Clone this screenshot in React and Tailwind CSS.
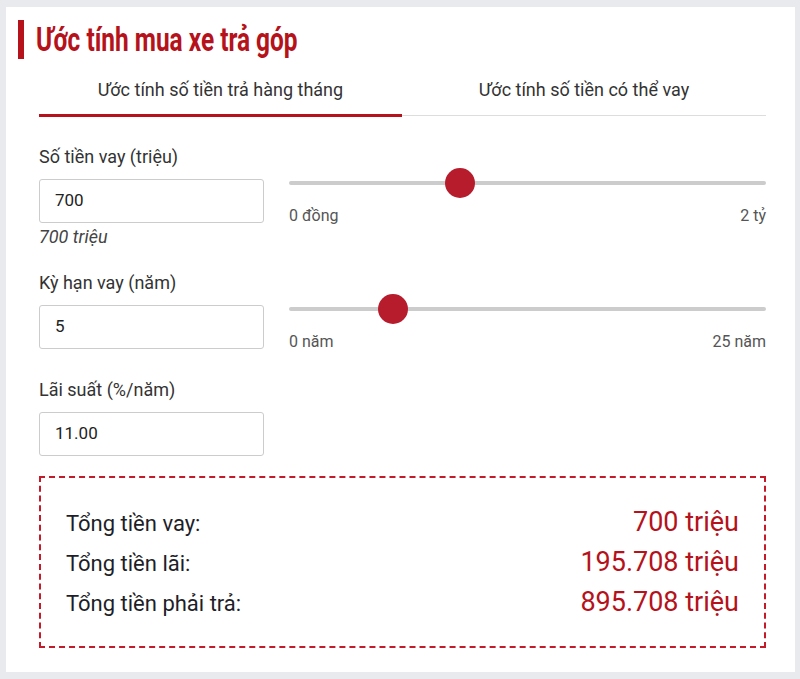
const Slider = ({ pos, minLabel, maxLabel }) => (
    <div className="flex-1 -mt-[11px]">
        <div className="relative h-[30px] flex items-center">
            <div className="w-full h-[4px] bg-[#cccccc] rounded"></div>
            <div
                className="absolute top-0 w-[30px] h-[30px] rounded-full bg-[#b71c2c] -ml-[15px]"
                style={{ left: `${pos}%` }}
            ></div>
        </div>
        <div className="flex justify-between text-[16px] text-[#555] mt-[8px] leading-[20px]">
            <span>{minLabel}</span>
            <span>{maxLabel}</span>
        </div>
    </div>
);

const Field = ({ label, value, note, children }) => (
    <div>
        <div className="text-[18px] text-[#333] leading-[22px]">{label}</div>
        <div className="flex gap-[25px] mt-[11px]">
            <div className="w-[225px] shrink-0">
                <div className="h-[44px] border border-[#ccc] rounded-[3px] bg-white flex items-center px-[15px] text-[17px] text-[#222]">
                    {value}
                </div>
                {note && <div className="italic text-[18px] text-[#444] mt-[3px] leading-[22px]">{note}</div>}
            </div>
            {children}
        </div>
    </div>
);

const Row = ({ label, value }) => (
    <div className="flex items-baseline justify-between h-[40px] leading-[39px]">
        <span className="text-[22px] text-[#1e1e28]">{label}</span>
        <span className="text-[27px] text-[#b5121b]">{value}</span>
    </div>
);

export default function App() {
    return (
        <div className="w-[800px] h-[679px] bg-[#e9eaee] pt-[7px] pl-[6px]" style={{ fontFamily: "Roboto, 'Noto Sans', sans-serif" }}>
            <div className="w-[789px] h-[665px] bg-white pt-[13px]">
                <div className="flex items-center pl-[12px]">
                    <div className="w-[6px] h-[39px] bg-[#b5121b]"></div>
                    <h1
                        className="ml-[12px] text-[33px] font-bold text-[#b5121b] leading-[39px] origin-left scale-x-[0.74] whitespace-nowrap"
                    >
                        Ước tính mua xe trả góp
                    </h1>
                </div>

                <div className="ml-[33px] mr-[29px] mt-[17px] flex border-b border-[#ddd]">
                    <div className="w-[363px] text-center text-[18px] leading-[27px] text-[#333] pb-[11px] border-b-[3px] border-[#b5121b] -mb-[2px]">
                        Ước tính số tiền trả hàng tháng
                    </div>
                    <div className="flex-1 text-center text-[18px] leading-[27px] text-[#333] pb-[11px]">
                        Ước tính số tiền có thể vay
                    </div>
                </div>

                <div className="ml-[33px] mr-[29px] pt-[30px] flex flex-col">
                    <Field label="Số tiền vay (triệu)" value="700" note="700 triệu">
                        <Slider pos={35.9} minLabel="0 đồng" maxLabel="2 tỷ" />
                    </Field>
                    <div className="mt-[24px]">
                        <Field label="Kỳ hạn vay (năm)" value="5">
                            <Slider pos={21.8} minLabel="0 năm" maxLabel="25 năm" />
                        </Field>
                    </div>
                    <div className="mt-[27px]">
                        <Field label="Lãi suất (%/năm)" value="11.00" />
                    </div>
                </div>

                <div className="ml-[33px] mr-[29px] mt-[20px] h-[172px] border-2 border-dashed border-[#c41a2a] px-[25px] pt-[25px]">
                    <Row label="Tổng tiền vay:" value="700 triệu" />
                    <Row label="Tổng tiền lãi:" value="195.708 triệu" />
                    <Row label="Tổng tiền phải trả:" value="895.708 triệu" />
                </div>
            </div>
        </div>
    );
}
